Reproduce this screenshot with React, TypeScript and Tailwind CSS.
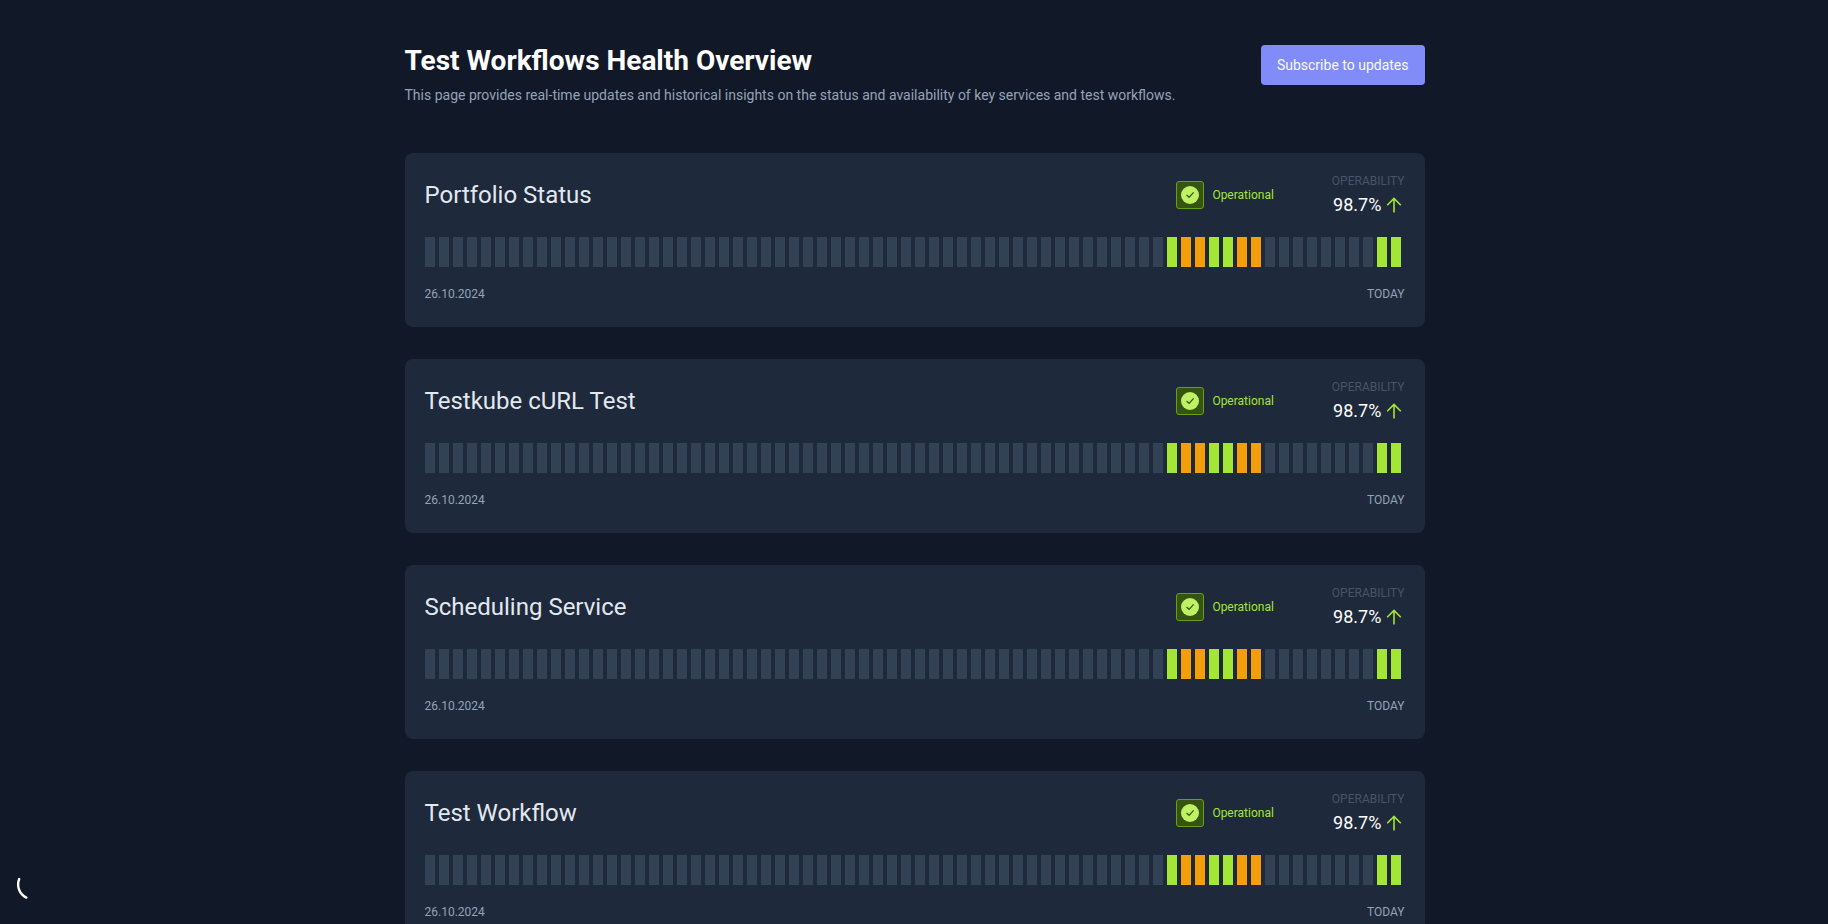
const services = ["Portfolio Status", "Testkube cURL Test", "Scheduling Service", "Test Workflow"];

type Status = "none" | "passed" | "degraded";

const barColors: Record<Status, string> = {
  none: "bg-[#334155]",
  passed: "bg-[#a3e635]",
  degraded: "bg-[#f59e0b]",
};

const history: Status[] = [
  ...Array<Status>(53).fill("none"),
  "passed",
  "degraded",
  "degraded",
  "passed",
  "passed",
  "degraded",
  "degraded",
  ...Array<Status>(8).fill("none"),
  "passed",
  "passed",
];

function StatusBadge() {
  return (
    <div className="flex items-center gap-2 text-xs text-[#a3e635]">
      <span className="flex size-7 items-center justify-center rounded-[3px] border border-[#65a30d] bg-[#365314]">
        <svg viewBox="0 0 18 18" className="size-[18px]" aria-hidden="true">
          <circle cx="9" cy="9" r="9" fill="#bef264" />
          <path d="M5.6 9 8.1 11.4 12.6 6.4" fill="none" stroke="#365314" strokeWidth="1.3" />
        </svg>
      </span>
      Operational
    </div>
  );
}

function ServiceCard({ name }: { name: string }) {
  return (
    <section className="flex flex-col rounded-lg bg-[#1e293b] px-5 pt-5 pb-6">
      <div className="flex h-11 items-center">
        <h2 className="flex-1 text-2xl text-[#e2e8f0]">{name}</h2>
        <StatusBadge />
        <div className="ml-[58px] flex flex-col gap-0.5 self-start">
          <div className="text-xs text-[#475569]">OPERABILITY</div>
          <div className="flex items-center justify-center gap-1 text-lg text-white">
            98.7%
            <svg viewBox="0 0 18 18" className="size-[18px]" aria-hidden="true">
              <path
                d="M9 16.5V2.5M2.2 9.2 9 2.4l6.8 6.8"
                fill="none"
                stroke="#a3e635"
                strokeWidth="1.6"
              />
            </svg>
          </div>
        </div>
      </div>
      <div className="mt-5 flex gap-1">
        {history.map((status, day) => (
          <span key={day} className={`h-[30px] w-2.5 ${barColors[status]}`} />
        ))}
      </div>
      <div className="mt-[18px] flex justify-between text-xs/[18px] text-[#94a3b8]">
        <span>26.10.2024</span>
        <span>TODAY</span>
      </div>
    </section>
  );
}

export default function App() {
  return (
    <div className="h-screen overflow-y-auto bg-[#111827] pl-px font-[Roboto,sans-serif] [scrollbar-width:none]">
      <main className="mx-auto max-w-[1020px] pt-[45px] pb-8">
        <header className="flex items-start justify-between">
          <div>
            <h1 className="text-[28px]/8 font-bold text-white">Test Workflows Health Overview</h1>
            <p className="mt-2 text-sm text-[#94a3b8]">
              This page provides real-time updates and historical insights on the status and
              availability of key services and test workflows.
            </p>
          </div>
          <button className="h-10 rounded-[4px] bg-[#818cf8] px-4 text-sm text-[#f8fafc]">
            Subscribe to updates
          </button>
        </header>
        <div className="mt-12 flex flex-col gap-8">
          {services.map((name) => (
            <ServiceCard key={name} name={name} />
          ))}
        </div>
      </main>
      <svg viewBox="0 0 36 36" className="fixed bottom-[21px] left-[14px] size-9" aria-hidden="true">
        <path
          d="M5.2 12A14.5 14.5 0 0 0 12.4 30.6"
          fill="none"
          stroke="#ffffff"
          strokeWidth="2.4"
          strokeLinecap="round"
        />
      </svg>
    </div>
  );
}
